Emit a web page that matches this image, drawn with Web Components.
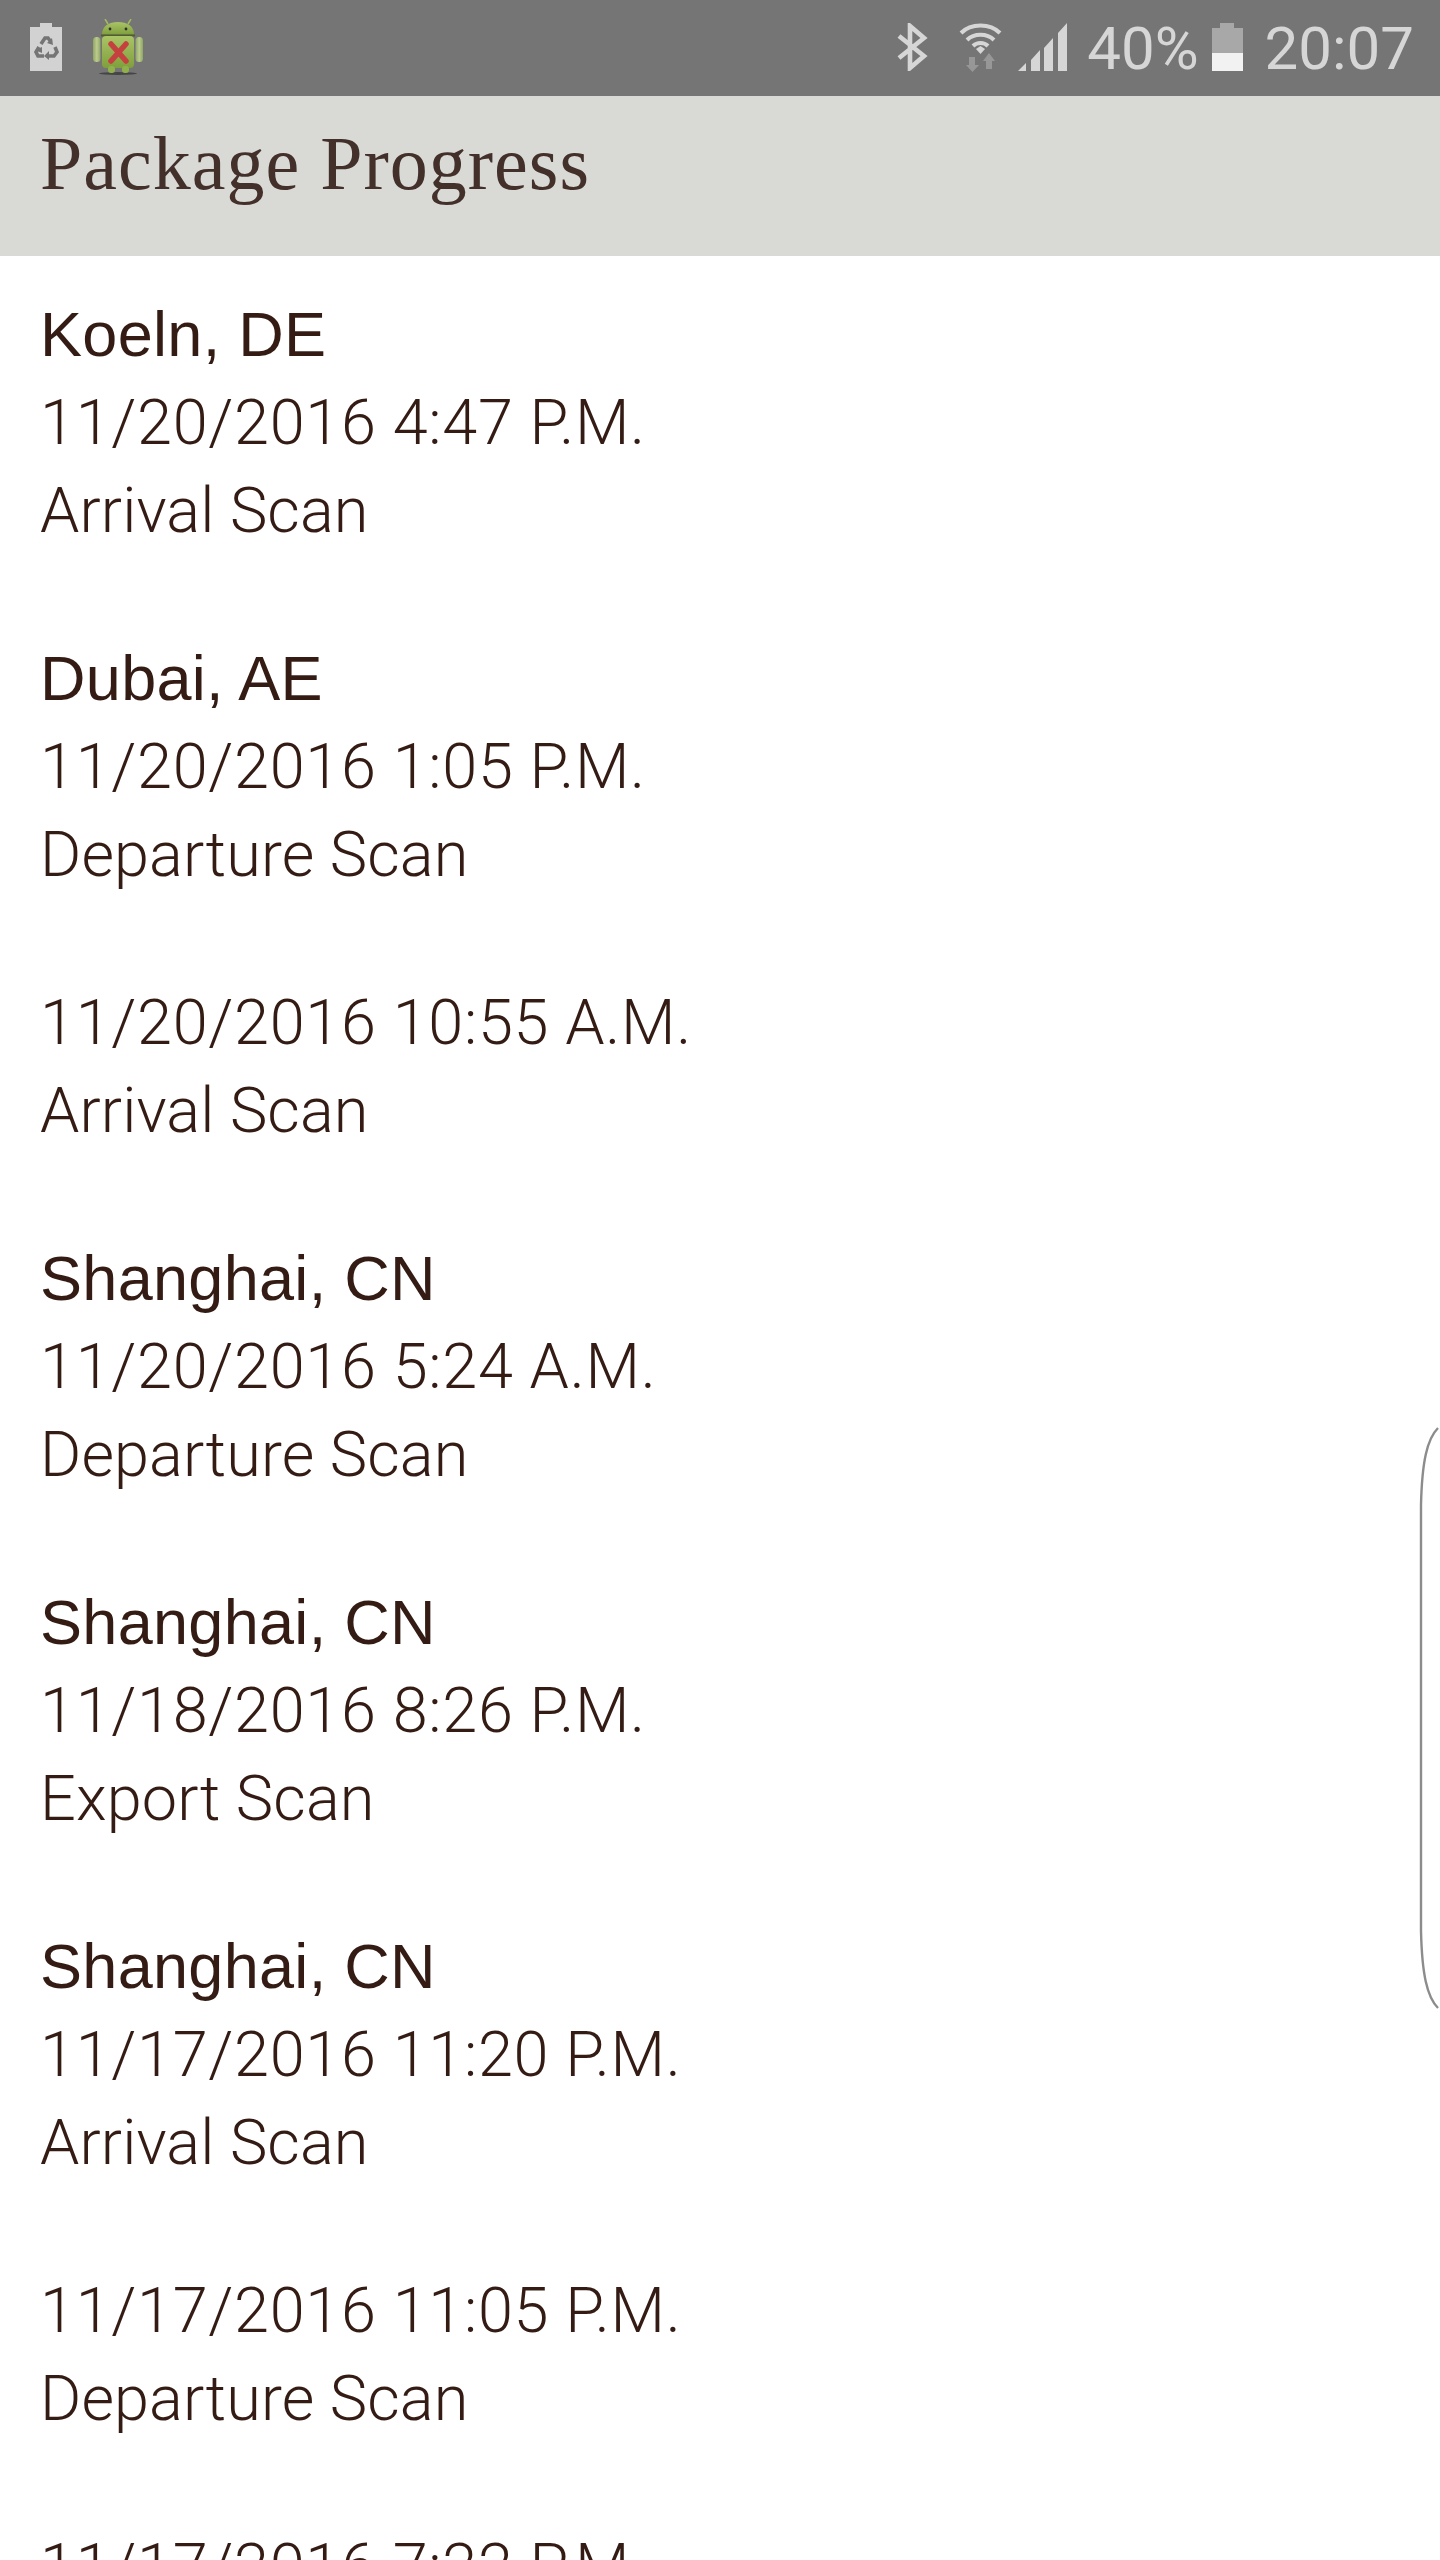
<!DOCTYPE html>
<html>
<head>
<meta charset="utf-8">
<title>Package Progress</title>
<style>
    html, body { margin: 0; padding: 0; background: #fff; }
    body { height: 2560px; overflow: hidden; }
</style>
</head>
<body>
<package-screen>
    <status-bar slot="top"></status-bar>
    <title-bar slot="top">Package Progress</title-bar>
    <scan-row location="Koeln, DE" time="11/20/2016 4:47 P.M." status="Arrival Scan"></scan-row>
    <scan-row location="Dubai, AE" time="11/20/2016 1:05 P.M." status="Departure Scan"></scan-row>
    <scan-row time="11/20/2016 10:55 A.M." status="Arrival Scan"></scan-row>
    <scan-row location="Shanghai, CN" time="11/20/2016 5:24 A.M." status="Departure Scan"></scan-row>
    <scan-row location="Shanghai, CN" time="11/18/2016 8:26 P.M." status="Export Scan"></scan-row>
    <scan-row location="Shanghai, CN" time="11/17/2016 11:20 P.M." status="Arrival Scan"></scan-row>
    <scan-row time="11/17/2016 11:05 P.M." status="Departure Scan"></scan-row>
    <scan-row time="11/17/2016 7:22 P.M." status="Arrival Scan"></scan-row>
</package-screen>
<script>
class Package_Screen extends HTMLElement {
    constructor() {
        super();
        this.attachShadow({ mode: 'open' });
    }

    connectedCallback(){
        this.shadowRoot.innerHTML = `
                <style>
                    :host {
                        display: block;
                        position: relative;
                        width: 1440px;
                        height: 2560px;
                        overflow: hidden;
                        background: #fff;
                    }
                    .list {
                        display: flex;
                        flex-direction: column;
                        gap: 80px;
                        padding: 34px 0 0 40px;
                    }
                    svg {
                        position: absolute;
                        right: 0;
                        top: 1420px;
                    }
                </style>
                <slot name="top"></slot>
                <div class="list"><slot></slot></div>
                <svg width="24" height="596" viewBox="0 0 24 596" fill="none">
                    <path d="M22 8C11 19 6 42 5 85V511C6 554 11 577 22 588" stroke="#8c8c8c" stroke-width="2.4"/>
                </svg>
            `;
    }
}

class Status_Bar extends HTMLElement {
    constructor() {
        super();
        this.attachShadow({ mode: 'open' });
    }

    connectedCallback(){
        this.shadowRoot.innerHTML = `
                <style>
                    :host {
                        display: flex;
                        align-items: center;
                        justify-content: space-between;
                        height: 96px;
                        background: #757575;
                        color: #d6d6d6;
                        font-family: Roboto, sans-serif;
                        font-size: 60px;
                        padding: 0 26px 2px 30px;
                        box-sizing: border-box;
                    }
                    .side {
                        display: flex;
                        align-items: center;
                    }
                    span { padding-top: 2px; }
                    svg { display: block; flex: none; }
                    .recycle { margin-right: 31px; }
                    .bt { margin-right: 31px; }
                    .wifi { margin-right: 16px; }
                    .signal { margin-right: 20px; }
                    .pct { margin-right: 13px; }
                    .batt { margin-right: 22px; }
                </style>
                <div class="side">
                    <svg class="recycle" width="32" height="48" viewBox="0 0 32 48">
                        <path fill="#d2d2d2" d="M10 0h12v4h10v44H0V4h10z"/>
                        <g transform="translate(0 -3)">
                            <g fill="none" stroke="#757575" stroke-width="3.6">
                                <path d="M11 24l4-6h3l3 4"/>
                                <path d="M9 27l-3 5 2 4h6"/>
                                <path d="M19 36h5l3-4-2-5"/>
                            </g>
                            <path fill="#757575" d="M22 18l1 7-6-2zM5 30l7-3 0 6zM19 31v9l-5-4z"/>
                        </g>
                    </svg>
                    <svg width="50" height="56" viewBox="0 0 50 56">
                        <defs>
                            <linearGradient id="bodyGreen" x1="0" y1="0" x2="0" y2="1">
                                <stop offset="0" stop-color="#aac466"/>
                                <stop offset="1" stop-color="#7f9f3c"/>
                            </linearGradient>
                            <linearGradient id="armGreen" x1="0" y1="0" x2="1" y2="0">
                                <stop offset="0" stop-color="#8ea662"/>
                                <stop offset="0.5" stop-color="#bccb8e"/>
                                <stop offset="1" stop-color="#8ea662"/>
                            </linearGradient>
                        </defs>
                        <ellipse cx="25" cy="54.5" rx="19" ry="1.5" fill="#454545"/>
                        <path d="M15 5l-3-5M35 5l3-5" stroke="#a3bd5c" stroke-width="1.5"/>
                        <path d="M9 15.5C9 7 16 3 25 3s16 4 16 12.5z" fill="url(#bodyGreen)"/>
                        <circle cx="17" cy="10" r="1.4" fill="#2f2f2f"/>
                        <circle cx="33" cy="10" r="1.4" fill="#2f2f2f"/>
                        <rect x="8" y="15.5" width="34" height="2" fill="#4f5e2c"/>
                        <rect x="9" y="17" width="32" height="32" rx="4" fill="url(#bodyGreen)"/>
                        <rect x="0" y="18" width="7.5" height="25" rx="3.5" fill="url(#armGreen)"/>
                        <rect x="42.5" y="18" width="7.5" height="25" rx="3.5" fill="url(#armGreen)"/>
                        <rect x="15" y="47" width="7" height="7" rx="3" fill="#8fb04a"/>
                        <rect x="29" y="47" width="7" height="7" rx="3" fill="#8fb04a"/>
                        <path d="M18 25l15 17M33 25L18 42" stroke="#c5413f" stroke-width="5.5" stroke-linecap="round"/>
                    </svg>
                </div>
                <div class="side">
                    <svg class="bt" width="32" height="48" viewBox="0 0 32 48">
                        <path d="M3 13L28 33L14 45V3L28 15L3 35" fill="none" stroke="#d6d6d6" stroke-width="4.6"/>
                    </svg>
                    <svg class="wifi" width="43" height="49" viewBox="0 0 43 49">
                        <g fill="none" stroke="#d6d6d6" stroke-width="4">
                            <path d="M2 10C12 0 31 0 41 10"/>
                            <path d="M8 17C15 10 28 10 35 17"/>
                            <path d="M14 23C18 19 25 19 29 23"/>
                        </g>
                        <path d="M17 26l4.500-3 4.500 3-4.500 5z" fill="#d6d6d6"/>
                        <path d="M10 34h6v8h4l-6.500 7-6.500-7h3z" fill="#979797"/>
                        <path d="M27 46v-8h-3l6-8 6 8h-3v8z" fill="#979797"/>
                    </svg>
                    <svg class="signal" width="49" height="49" viewBox="0 0 49 49">
                        <path fill="#d6d6d6" d="M0 48l8-8v8zM13 37l9-10v21h-9zM26 25l9-10v33h-9zM40 10l9-10v48h-9z"/>
                    </svg>
                    <span class="pct">40%</span>
                    <svg class="batt" width="31" height="48" viewBox="0 0 31 48">
                        <path fill="#a8a8a8" d="M8 0h14v5h9v26H0V5h8z"/>
                        <rect y="30" width="31" height="18" fill="#f2f2f2"/>
                    </svg>
                    <span>20:07</span>
                </div>
            `;
    }
}

class Title_Bar extends HTMLElement {
    constructor() {
        super();
        this.attachShadow({ mode: 'open' });
    }

    connectedCallback(){
        this.shadowRoot.innerHTML = `
                <style>
                    :host {
                        display: block;
                        height: 160px;
                        box-sizing: border-box;
                        padding: 25px 0 0 40px;
                        background: #d9dad6;
                        color: #43302a;
                        font-family: 'Liberation Serif', serif;
                        font-size: 76px;
                        letter-spacing: 1px;
                        line-height: 84px;
                    }
                </style>
                <slot></slot>
            `;
    }
}

class Scan_Row extends HTMLElement {
    constructor() {
        super();
        this.attachShadow({ mode: 'open' });
    }

    connectedCallback(){
        let location = this.getAttribute('location') || false;
        let time = this.getAttribute('time');
        let status = this.getAttribute('status');
        let locationHtml = location ? `<p class="place">${location}</p>` : "";
        this.shadowRoot.innerHTML = `
                <style>
                    :host {
                        display: block;
                        color: #341c14;
                    }
                    p {
                        margin: 0;
                        height: 88px;
                        font-family: Roboto, sans-serif;
                        font-weight: 300;
                        font-size: 63px;
                        letter-spacing: 0.1px;
                        line-height: 90px;
                        white-space: nowrap;
                    }
                    .time {
                        letter-spacing: 0.7px;
                    }
                    .place {
                        font-family: 'Liberation Sans', sans-serif;
                        font-weight: 400;
                        letter-spacing: 0.3px;
                        line-height: 88px;
                    }
                </style>
                ${locationHtml}
                <p class="time">${time}</p>
                <p>${status}</p>
            `;
    }
}

customElements.define('package-screen', Package_Screen);
customElements.define('status-bar', Status_Bar);
customElements.define('title-bar', Title_Bar);
customElements.define('scan-row', Scan_Row);
</script>
</body>
</html>
